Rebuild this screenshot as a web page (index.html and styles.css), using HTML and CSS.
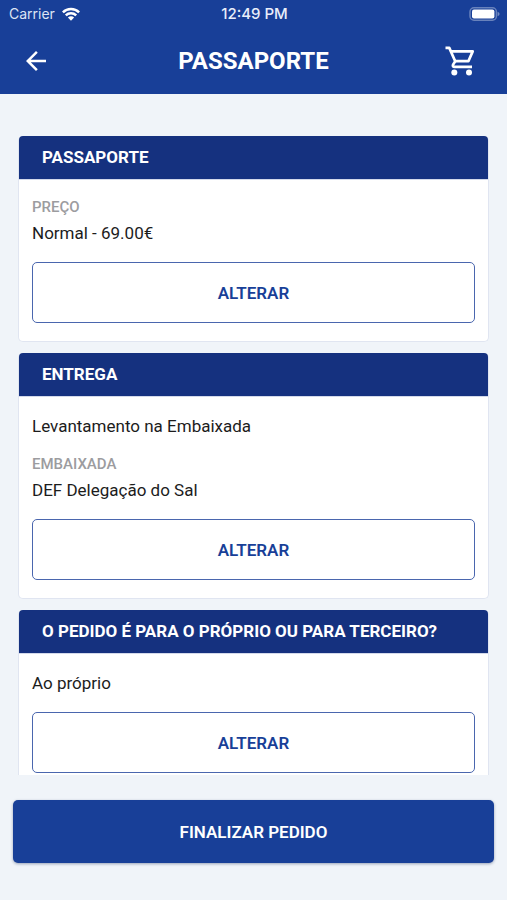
FILE: index.html
```html
<!DOCTYPE html>
<html lang="pt">
<head>
<meta charset="utf-8">
<meta name="viewport" content="width=device-width, initial-scale=1">
<title>Passaporte</title>
<link rel="stylesheet" href="styles.css">
</head>
<body>
<div class="app">
  <header class="top">
    <div class="status">
      <span class="carrier">Carrier
        <svg class="wifi" viewBox="0 0 18 14" aria-hidden="true">
          <g fill="none" stroke="currentColor" stroke-width="2.5">
            <path d="M.9 5.3a11.5 11.5 0 0 1 16.2 0"/>
            <path d="M3.8 8.4a7.4 7.4 0 0 1 10.4 0"/>
          </g>
          <path d="M9 13.8 5.9 10.6a4.4 4.4 0 0 1 6.2 0z" fill="currentColor"/>
        </svg>
      </span>
      <span class="clock">12:49 PM</span>
      <svg class="battery" viewBox="0 0 31 14" aria-hidden="true">
        <rect x="1" y=".8" width="26.4" height="12.4" rx="4" fill="none" stroke="currentColor" stroke-width="1.5" opacity=".35"/>
        <rect x="3" y="2.4" width="22.4" height="9.2" rx="2" fill="currentColor"/>
        <path d="M28.6 4.8q2 .7 2 2.2t-2 2.2z" fill="currentColor" opacity=".4"/>
      </svg>
    </div>
    <nav class="bar">
      <button class="icon-button" type="button" aria-label="Voltar">
        <svg class="back" viewBox="4 4 16 16" aria-hidden="true"><path fill="currentColor" d="M20 11H7.83l5.59-5.59L12 4l-8 8 8 8 1.41-1.41L7.83 13H20v-2z"/></svg>
      </button>
      <h1 class="title">PASSAPORTE</h1>
      <button class="icon-button" type="button" aria-label="Carrinho">
        <svg class="cart" viewBox="0 0 30 30" aria-hidden="true">
          <g fill="none" stroke="currentColor" stroke-width="2.7" stroke-linejoin="round">
            <path d="M.5 1.9H4.3L10.2 15.2 8.1 18.6Q7.2 20.9 9.6 20.9H27"/>
            <path d="M5.7 5.4H27.7L23.4 15.2H10.2"/>
          </g>
          <circle cx="9.3" cy="26.5" r="3" fill="currentColor"/>
          <circle cx="24" cy="26.5" r="3" fill="currentColor"/>
        </svg>
      </button>
    </nav>
  </header>

  <main class="content">
    <section class="card">
      <h2 class="card-title">PASSAPORTE</h2>
      <div class="card-body">
        <dl class="field">
          <dt class="label">PREÇO</dt>
          <dd class="value">Normal - 69.00€</dd>
        </dl>
        <button class="outline" type="button">ALTERAR</button>
      </div>
    </section>

    <section class="card">
      <h2 class="card-title">ENTREGA</h2>
      <div class="card-body">
        <p class="value">Levantamento na Embaixada</p>
        <dl class="field">
          <dt class="label">EMBAIXADA</dt>
          <dd class="value">DEF Delegação do Sal</dd>
        </dl>
        <button class="outline" type="button">ALTERAR</button>
      </div>
    </section>

    <section class="card">
      <h2 class="card-title">O PEDIDO É PARA O PRÓPRIO OU PARA TERCEIRO?</h2>
      <div class="card-body">
        <p class="value">Ao próprio</p>
        <button class="outline" type="button">ALTERAR</button>
      </div>
    </section>
  </main>

  <footer class="footer">
    <button class="primary" type="button">FINALIZAR PEDIDO</button>
  </footer>
</div>
</body>
</html>
```
FILE: styles.css
```css
* { box-sizing: border-box; }

body,
h1,
h2,
p,
dl,
dd { margin: 0; }

body {
  background: #f0f4f9;
  color: #1c1c1c;
  font-family: Roboto, "Liberation Sans", sans-serif;
  font-size: 17px;
}

button {
  font: inherit;
  font-weight: 600;
  cursor: pointer;
}

.app {
  display: flex;
  flex-direction: column;
  height: 100vh;
}

.top {
  background: #183f98;
  color: #fff;
}

.status {
  display: grid;
  grid-template-columns: 1fr auto 1fr;
  align-items: center;
  height: 27px;
  padding: 0 7px 0 9px;
  font-family: Inter, sans-serif;
  font-size: 14px;
}

.carrier {
  display: flex;
  align-items: center;
  gap: 7px;
  color: #dde4f4;
}

.wifi {
  width: 18px;
  height: 14px;
  color: #fff;
}

.clock {
  color: #e9eefa;
  font-size: 15px;
  font-weight: 500;
}

.battery {
  justify-self: end;
  width: 31px;
  height: 14px;
}

.bar {
  display: grid;
  grid-template-columns: 1fr auto 1fr;
  align-items: center;
  height: 67px;
  padding: 0 23px;
}

.icon-button {
  display: grid;
  place-items: center;
  width: 48px;
  height: 48px;
  padding: 0;
  border: 0;
  background: none;
  color: #fff;
}

.icon-button:first-child { width: 26px; }

.icon-button:last-child { justify-self: end; }

.back {
  width: 20px;
  height: 20px;
}

.cart {
  width: 30px;
  height: 30px;
}

.title {
  font-size: 24px;
  font-weight: 700;
  line-height: 32px;
}

.content {
  flex: 1;
  min-height: 0;
  display: flex;
  flex-direction: column;
  gap: 11px;
  padding: 42px 18px 0;
  overflow-y: auto;
  scrollbar-width: none;
}

.card {
  flex: none;
  border: 1px solid #e0e5f1;
  border-top: 0;
  border-radius: 5px;
  background: #fff;
}

.card-title {
  padding: 0 23px;
  border-bottom: 1px solid #d3d9ea;
  border-radius: 4px 4px 0 0;
  background: #15317f;
  color: #fff;
  font-size: 17px;
  font-weight: 700;
  line-height: 43px;
}

.card-body {
  display: flex;
  flex-direction: column;
  gap: 17px;
  padding: 17px 13px 18px;
}

.field {
  display: flex;
  flex-direction: column;
  gap: 4px;
}

.label {
  color: #9c9c9f;
  font-size: 15px;
  font-weight: 500;
  line-height: 20px;
}

.value { line-height: 24px; }

.value + .field { margin-top: -1px; }

.outline {
  height: 61px;
  border: 1px solid #4a66ae;
  border-radius: 5px;
  background: #fff;
  color: #183f98;
}

.footer { padding: 25px 13px 37px; }

.primary {
  display: block;
  width: 100%;
  height: 63px;
  border: 0;
  border-radius: 5px;
  background: #183f98;
  box-shadow: 0 1px 3px rgba(20, 40, 90, .4);
  color: #fff;
}
```
